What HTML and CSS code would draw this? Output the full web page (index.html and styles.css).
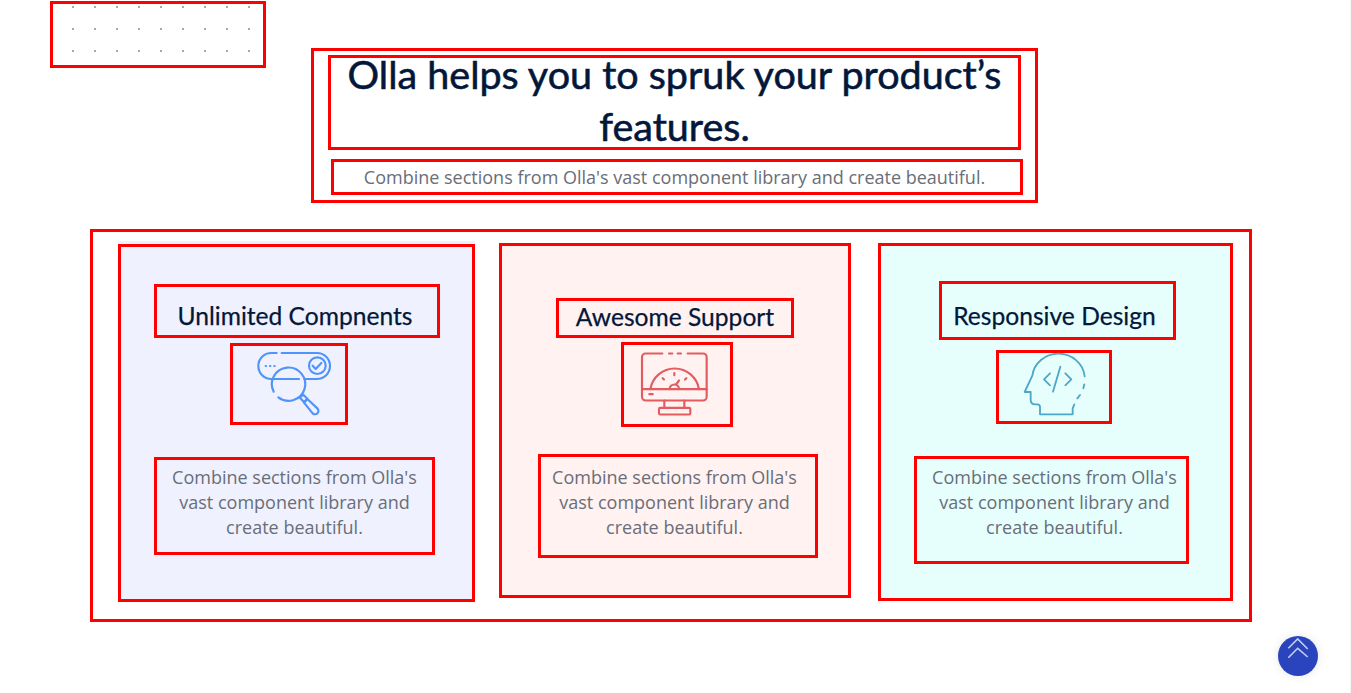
FILE: index.html
```html
<!DOCTYPE html>
<html lang="en">
<head>
    <meta charset="UTF-8">
    <meta name="viewport" content="width=device-width, initial-scale=1.0">
    <title>Olla features</title>
    <link rel="stylesheet" href="styles.css">
</head>
<body>
    <div class="page">
        <div class="top-shadow"></div>

        <div class="dots">
            <svg width="210" height="61" viewBox="0 0 210 61">
                <defs>
                    <pattern id="dot" width="22" height="22" x="19" y="2" patternUnits="userSpaceOnUse">
                        <rect width="2" height="2" fill="#a6a8ad"></rect>
                    </pattern>
                </defs>
                <rect width="210" height="61" fill="url(#dot)"></rect>
            </svg>
        </div>

        <section class="intro">
            <h2 class="intro-title"><span>Olla helps you to spruk your product’s features.</span></h2>
            <p class="intro-text">Combine sections from Olla's vast component library and create beautiful.</p>
        </section>

        <section class="features">
            <div class="card card-blue">
                <h4 class="card-title">Unlimited Compnents</h4>
                <div class="card-icon">
                    <svg width="90" height="70" viewBox="57 27 270 210" fill="none" stroke="#4f94fb" stroke-width="6.5" stroke-linecap="round" stroke-linejoin="round">
                        <path d="M155 39H139a39 39 0 0 0 0 78h3"></path>
                        <path d="M170 39H276a39 39 0 0 1 0 78H238"></path>
                        <path d="M140 117H222"></path>
                        <path d="M122 78h1M135 78h1M148 78h1"></path>
                        <circle cx="277" cy="77" r="25"></circle>
                        <path d="M263 77l9 10 17-18"></path>
                        <path d="M146 155a50 50 0 1 1 14 17"></path>
                        <path d="M224 172l11-8 12 12-10 11z"></path>
                        <path d="M237 188L247 177L277 205A10 10 0 0 1 263 220Z"></path>
                    </svg>
                </div>
                <p class="card-text">Combine sections from Olla's vast component library and create beautiful.</p>
            </div>

            <div class="card card-red">
                <h4 class="card-title">Awesome Support</h4>
                <div class="card-icon">
                    <svg width="90" height="70" viewBox="51 28.5 270 210" fill="none" stroke="#e25c60" stroke-width="6.5" stroke-linecap="round" stroke-linejoin="round">
                        <path d="M142 39H92a11 11 0 0 0-11 11V169a11 11 0 0 0 11 11H264a11 11 0 0 0 11-11V50a11 11 0 0 0-11-11H218"></path>
                        <path d="M162 39h10M188 39h10"></path>
                        <path d="M81 146H275"></path>
                        <path d="M103 161h10"></path>
                        <path d="M106 146a74 74 0 0 1 146 0"></path>
                        <path d="M164 146a14 14 0 0 1 28 0"></path>
                        <path d="M183 132l9-12"></path>
                        <path d="M143 113l4 4M178 98v6M214 113l-4 4"></path>
                        <path d="M148 180v22M208 180v22"></path>
                        <rect x="132" y="202" width="94" height="20" rx="4"></rect>
                    </svg>
                </div>
                <p class="card-text">Combine sections from Olla's vast component library and create beautiful.</p>
            </div>

            <div class="card card-green">
                <h4 class="card-title">Responsive Design</h4>
                <div class="card-icon">
                    <svg width="90" height="70" viewBox="57 21 270 210" fill="none" stroke="#4ba8c9" stroke-width="5.5" stroke-linecap="round" stroke-linejoin="round">
                        <path d="M284 94C280 55 245 26 205 26C165 26 132 55 127 92L104 141H122V165Q122 178 136 178H142Q150 178 150 186V208H248V190L253 178"></path>
                        <path d="M283 118l-3 12M270 150l-8 10"></path>
                        <path d="M180 85l-18 18 18 18M226 85l18 18-18 18M211 65l-22 75"></path>
                    </svg>
                </div>
                <p class="card-text">Combine sections from Olla's vast component library and create beautiful.</p>
            </div>
        </section>

        <a class="to-top" href="#">
            <svg width="40" height="40" viewBox="0 0 40 40" fill="none" stroke="#c5cdf0" stroke-width="1.6">
                <path d="M10.3 12.3L19.7 3L29.7 13"></path>
                <path d="M10.3 21.7L19.7 12.3L29.7 21"></path>
            </svg>
        </a>
    </div>
</body>
</html>
```

FILE: styles.css
```css
* {
    box-sizing: border-box;
}
html, body {
    margin: 0;
    height: 100%;
    overflow: hidden;
    background-color: #f5f5f5;
}
body {
    font-family: "Open Sans", Arial, sans-serif;
    color: #696e78;
}
.page {
    position: relative;
    width: 1350px;
    height: 693px;
    background-color: white;
    overflow: hidden;
}
.top-shadow {
    position: absolute;
    top: 0;
    left: 0;
    width: 100%;
    height: 0;
    box-shadow: 0px 0px 6px rgba(0, 0, 0, 0.12);
}
.dots {
    position: absolute;
    top: 1px;
    left: 50px;
    width: 216px;
    height: 67px;
    border: 3px solid red;
}
.dots svg {
    display: block;
}

/* heading block */
.intro {
    width: 727px;
    height: 155px;
    margin: 48px 0 0 311px;
    border: 3px solid red;
    text-align: center;
}
.intro-title {
    display: flex;
    align-items: center;
    width: 693px;
    height: 95px;
    margin: 4px 0 0 14px;
    padding-bottom: 5px;
    border: 3px solid red;
    font-family: Lato, "Open Sans", sans-serif;
    font-size: 39.5px;
    font-weight: 400;
    -webkit-text-stroke: 0.6px #03173a;
    line-height: 52px;
    color: #03173a;
}
.intro-title span {
    display: block;
    width: 100%;
}
.intro-text {
    width: 692px;
    height: 36px;
    margin: 9px 0 0 17px;
    padding-right: 5px;
    border: 3px solid red;
    font-size: 18px;
    line-height: 30px;
}

/* feature cards */
.features {
    display: flex;
    align-items: flex-start;
    width: 1162px;
    height: 393px;
    margin: 26px 0 0 90px;
    padding: 11px 0 0 25px;
    border: 3px solid red;
}
.card {
    border: 3px solid red;
    text-align: center;
}
.card-title {
    margin: 0;
    border: 3px solid red;
    font-family: Lato, "Open Sans", sans-serif;
    font-size: 24.6px;
    font-weight: 400;
    -webkit-text-stroke: 0.25px #03173a;
    line-height: 30px;
    color: #03173a;
}
.card-icon {
    display: flex;
    align-items: center;
    justify-content: center;
    border: 3px solid red;
}
.card-text {
    margin: 0;
    border: 3px solid red;
    font-size: 18px;
    line-height: 25px;
}

.card-blue {
    width: 357px;
    height: 358px;
    margin-top: 1px;
    background-color: #eff1fe;
    box-shadow: 0 -3px 0 #eff1fe;
}
.card-blue .card-title {
    width: 286px;
    height: 54px;
    margin: 37px 0 0 33px;
    padding: 14px 4px 0 0;
}
.card-blue .card-icon {
    width: 118px;
    height: 82px;
    margin: 5px 0 0 109px;
}
.card-blue .card-text {
    width: 281px;
    height: 98px;
    margin: 32px 0 0 33px;
    padding-top: 5px;
}

.card-red {
    width: 352px;
    height: 355px;
    margin-left: 24px;
    background-color: #fff2f1;
}
.card-red .card-title {
    width: 238px;
    height: 40px;
    margin: 52px 0 0 54px;
    padding-top: 1px;
}
.card-red .card-icon {
    width: 112px;
    height: 85px;
    margin: 4px 0 0 119px;
}
.card-red .card-text {
    width: 280px;
    height: 104px;
    margin: 27px 0 0 36px;
    padding: 8px 7px 0 0;
}

.card-green {
    width: 355px;
    height: 358px;
    margin-left: 27px;
    background-color: #e6fffd;
}
.card-green .card-title {
    width: 237px;
    height: 59px;
    margin: 35px 0 0 58px;
    padding: 17px 6px 0 0;
}
.card-green .card-icon {
    width: 116px;
    height: 74px;
    margin: 10px 0 0 115px;
}
.card-green .card-text {
    width: 275px;
    height: 108px;
    margin: 32px 0 0 33px;
    padding: 6px 0 0 6px;
}

.to-top {
    position: absolute;
    top: 636px;
    left: 1278px;
    width: 40px;
    height: 40px;
    border-radius: 50%;
    background-color: #2a44bd;
    box-shadow: 0px 0px 10px rgba(0, 0, 0, 0.1);
}
.to-top svg {
    display: block;
}
```
